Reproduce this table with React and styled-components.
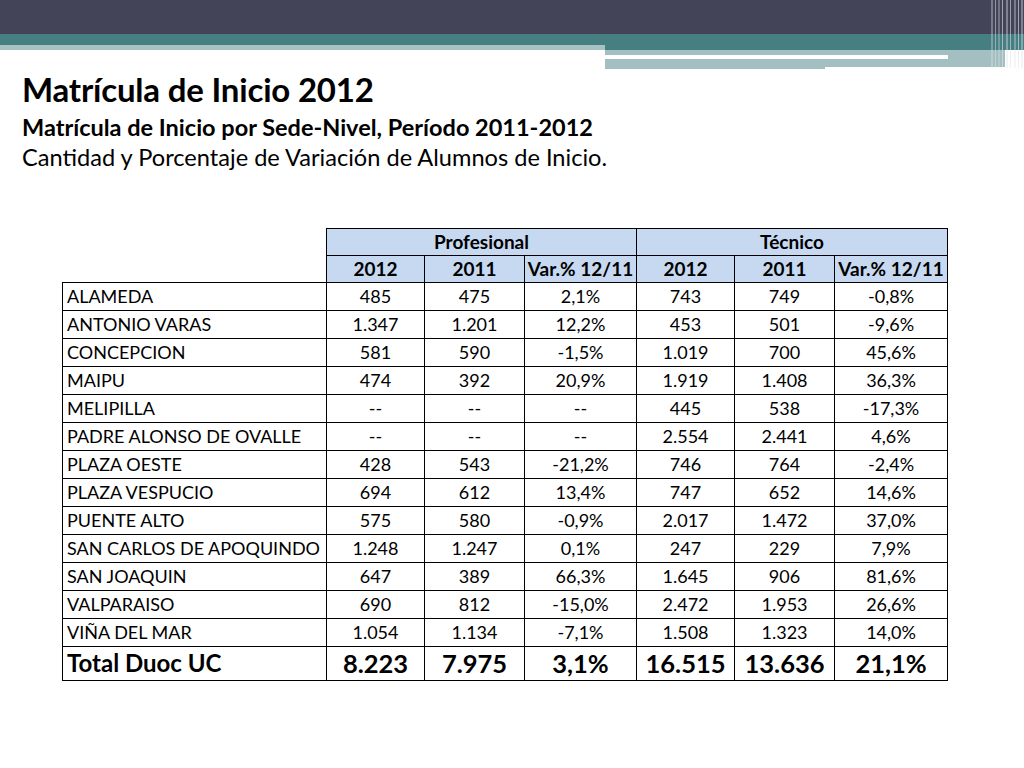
import React from "react";
import styled, { createGlobalStyle } from "styled-components";

const GlobalStyle = createGlobalStyle`
  html, body { margin: 0; padding: 0; background: #ffffff; }
  body { font-family: Lato, "Open Sans", "Liberation Sans", sans-serif; color: #000; }
`;

const Slide = styled.div`
  width: 1024px;
  height: 768px;
  background: #fff;
  display: flex;
  flex-direction: column;
  overflow: hidden;
`;

const Banner = styled.svg`
  display: block;
  width: 1024px;
  height: 70px;
  flex: none;
`;

const Heading = styled.div`
  padding: 0 0 0 22px;
  display: flex;
  flex-direction: column;
`;

const Title = styled.h1`
  margin: 0;
  font-size: 33px;
  font-weight: 700;
  line-height: 38px;
  letter-spacing: -0.2px;
`;

const Subtitle = styled.h2`
  margin: 4px 0 0;
  font-size: 23.5px;
  font-weight: 700;
  line-height: 30px;
`;

const Caption = styled.p`
  margin: 0;
  font-size: 23.6px;
  font-weight: 400;
  line-height: 30px;
`;

const TableWrap = styled.div`
  padding: 56px 0 0 62px;
`;

const Table = styled.table`
  border-collapse: collapse;
  table-layout: fixed;
  width: 885px;
`;

const Blank = styled.th`
  border: none;
  background: transparent;
`;

const HeadCell = styled.th`
  background: #c6d9f1;
  border: 1px solid #000;
  font-size: 19px;
  font-weight: 700;
  height: 26px;
  padding: 0;
  text-align: center;
  white-space: nowrap;
  line-height: 1.1;
`;

const Cell = styled.td`
  border: 1px solid #000;
  height: ${(p) => (p.$total ? "33px" : "27px")};
  padding: 0 ${(p) => (p.$left ? "4px" : "0")};
  font-size: ${(p) => (p.$total ? (p.$left ? "24px" : "25.5px") : "18px")};
  font-weight: ${(p) => (p.$total ? 700 : 400)};
  text-align: ${(p) => (p.$left ? "left" : "center")};
  white-space: nowrap;
  line-height: 1.1;
`;

const rows = [
  ["ALAMEDA", "485", "475", "2,1%", "743", "749", "-0,8%"],
  ["ANTONIO VARAS", "1.347", "1.201", "12,2%", "453", "501", "-9,6%"],
  ["CONCEPCION", "581", "590", "-1,5%", "1.019", "700", "45,6%"],
  ["MAIPU", "474", "392", "20,9%", "1.919", "1.408", "36,3%"],
  ["MELIPILLA", "--", "--", "--", "445", "538", "-17,3%"],
  ["PADRE ALONSO DE OVALLE", "--", "--", "--", "2.554", "2.441", "4,6%"],
  ["PLAZA OESTE", "428", "543", "-21,2%", "746", "764", "-2,4%"],
  ["PLAZA VESPUCIO", "694", "612", "13,4%", "747", "652", "14,6%"],
  ["PUENTE ALTO", "575", "580", "-0,9%", "2.017", "1.472", "37,0%"],
  ["SAN CARLOS DE APOQUINDO", "1.248", "1.247", "0,1%", "247", "229", "7,9%"],
  ["SAN JOAQUIN", "647", "389", "66,3%", "1.645", "906", "81,6%"],
  ["VALPARAISO", "690", "812", "-15,0%", "2.472", "1.953", "26,6%"],
  ["VIÑA DEL MAR", "1.054", "1.134", "-7,1%", "1.508", "1.323", "14,0%"],
];

const total = ["Total Duoc UC", "8.223", "7.975", "3,1%", "16.515", "13.636", "21,1%"];

const widths = [264, 98, 100, 112, 98, 100, 113];

function BannerArt() {
  const lines = [
    [991, 2, 0.35], [995, 1, 0.5], [998, 2, 0.3], [1002, 1, 0.6],
    [1006, 2, 0.4], [1010, 1, 0.55], [1014, 2, 0.35], [1018, 1, 0.6], [1021, 2, 0.4],
  ];
  return (
    <Banner viewBox="0 0 1024 70">
      <rect x="0" y="0" width="1024" height="34" fill="#434457" />
      <rect x="0" y="34" width="605" height="11" fill="#467f81" />
      <rect x="0" y="45" width="605" height="5" fill="#a8c2c4" />
      <rect x="605" y="34" width="419" height="16" fill="#467f81" />
      <rect x="605" y="50" width="400" height="17" fill="#a3bfc2" />
      <rect x="605" y="55" width="343" height="4" fill="#ffffff" />
      <rect x="605" y="67" width="220" height="2" fill="#a3bfc2" />
      {lines.map(([x, w, o], i) => (
        <rect key={i} x={x} y="0" width={w} height="68" fill="#e2e4ea" opacity={o} />
      ))}
    </Banner>
  );
}

export default function App() {
  return (
    <Slide>
      <GlobalStyle />
      <BannerArt />
      <Heading>
        <Title>Matrícula de Inicio 2012</Title>
        <Subtitle>Matrícula de Inicio por Sede-Nivel, Período 2011-2012</Subtitle>
        <Caption>Cantidad y Porcentaje de Variación de Alumnos de Inicio.</Caption>
      </Heading>
      <TableWrap>
        <Table>
          <colgroup>
            {widths.map((w, i) => (
              <col key={i} style={{ width: w }} />
            ))}
          </colgroup>
          <thead>
            <tr>
              <Blank />
              <HeadCell colSpan={3}>Profesional</HeadCell>
              <HeadCell colSpan={3}>Técnico</HeadCell>
            </tr>
            <tr>
              <Blank />
              <HeadCell>2012</HeadCell>
              <HeadCell>2011</HeadCell>
              <HeadCell>Var.% 12/11</HeadCell>
              <HeadCell>2012</HeadCell>
              <HeadCell>2011</HeadCell>
              <HeadCell>Var.% 12/11</HeadCell>
            </tr>
          </thead>
          <tbody>
            {rows.map((r) => (
              <tr key={r[0]}>
                {r.map((v, i) => (
                  <Cell key={i} $left={i === 0}>{v}</Cell>
                ))}
              </tr>
            ))}
            <tr>
              {total.map((v, i) => (
                <Cell key={i} $left={i === 0} $total>{v}</Cell>
              ))}
            </tr>
          </tbody>
        </Table>
      </TableWrap>
    </Slide>
  );
}
